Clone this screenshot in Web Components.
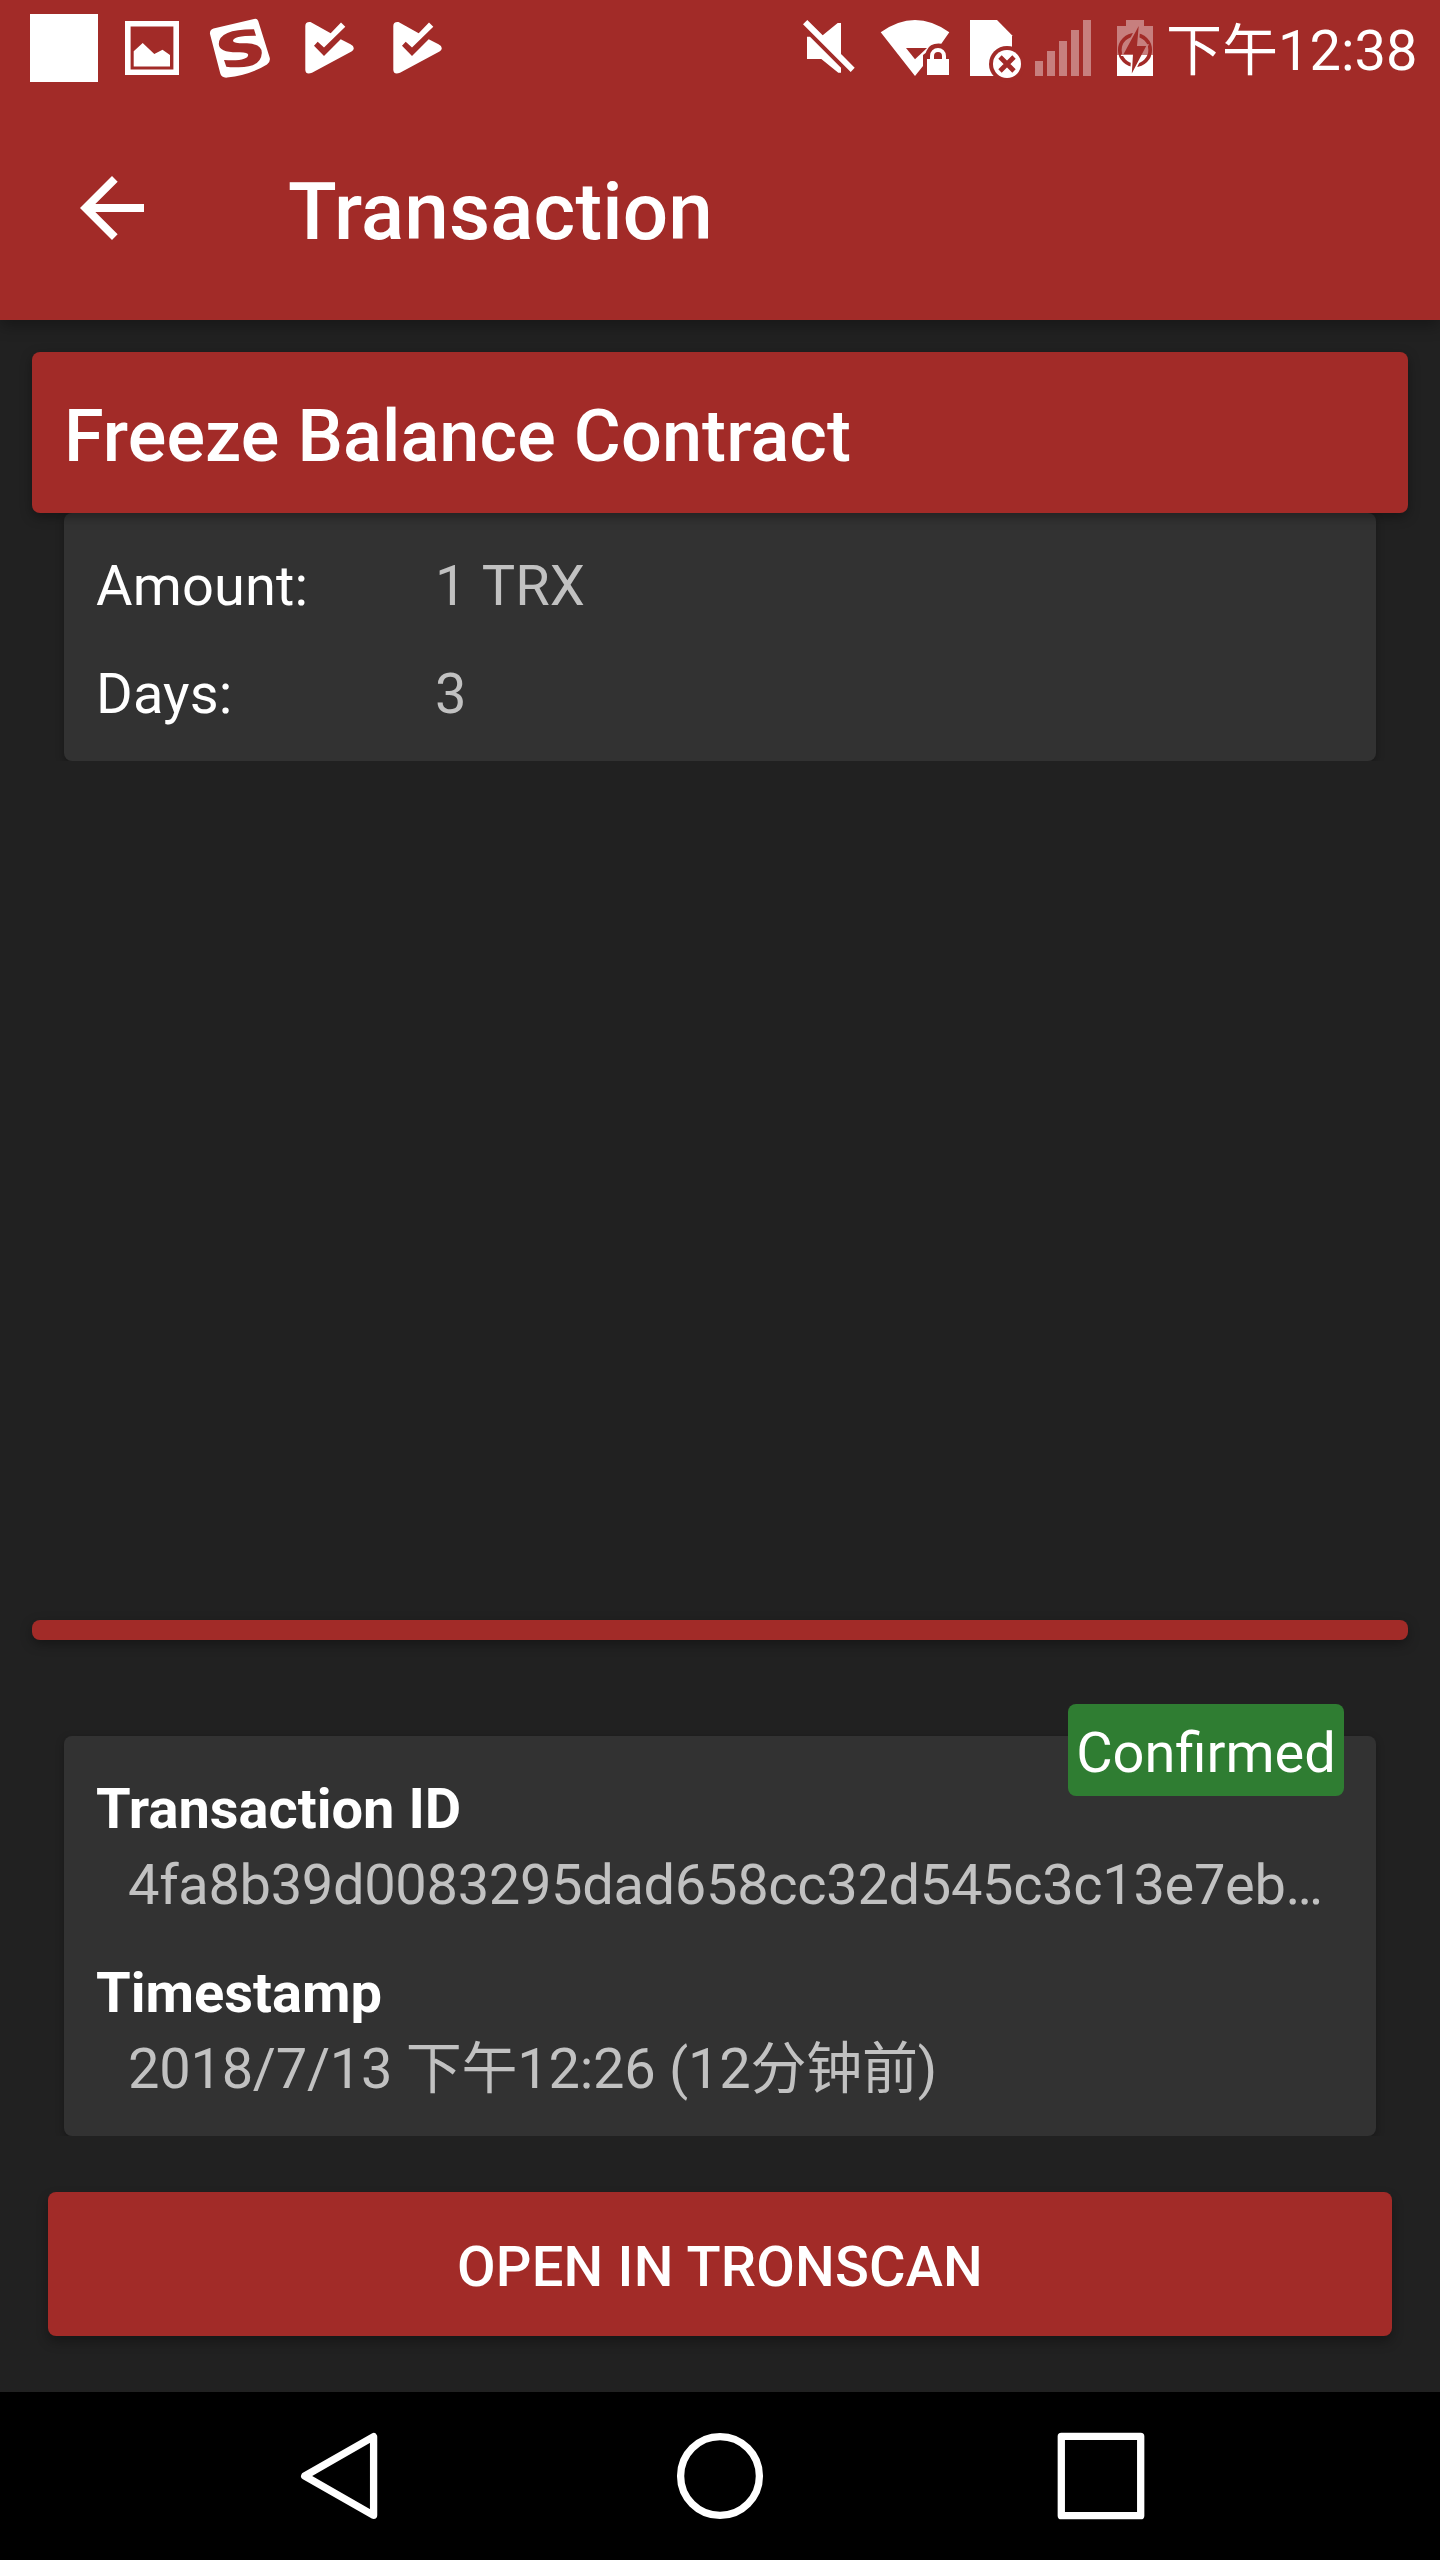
<!DOCTYPE html>
<html lang="zh-CN">
<head>
<meta charset="utf-8">
<title>Transaction</title>
<style>
  html, body { margin: 0; padding: 0; }
  body {
    width: 1440px; height: 2560px; overflow: hidden; background: #212121;
    font-family: Roboto, "Noto Sans CJK SC", sans-serif; color: #fff;
    --accent: #a22b28; --card: #323232; --muted: #c1c1c1; --ok: #2f7d32;
  }
</style>
</head>
<body>
<transaction-screen></transaction-screen>
<script>
const ICONS = {
  square: { box: '0 0 110 96', art: '<rect x="30" y="14" width="68" height="68"/>' },
  picture: { box: '110 0 84 96', art: '<path fill-rule="evenodd" d="M125 21h54v54h-54zM130.6 26.6v42.8h42.8v-42.8z"/><path d="M133.7 51.3 142.7 43 154.3 54 162.5 49.8 170 55V66.5H133.7z"/>' },
  sogou: { box: '194 0 96 96', art: '<path d="M213.500 28.500L254 19Q257 18 258.200 21L269.800 58Q270.500 62 267 64.500Q250 75 227 77.600Q221.500 78 220.300 73.500L210 34Q209.500 30 213.500 28.500Z"/><path fill="var(--accent)" d="M254 29.200 256 35.700Q233 35.500 233 41Q233.500 43.600 247 43.300Q262 44 261.800 53Q261 67.500 238 67.300Q231 67.500 226.300 66.700L224 60Q248 61.500 248.200 54.800Q248 52 238 52.300Q219 52.500 218.800 44Q219 29 254 29.200Z"/>' },
  check: { box: '290 0 88 96', art: '<path d="M305.300 26Q305.300 21.500 310.500 22L330.700 33.300 341 22.600 345.300 26.700 324 47.500 317.700 41.700 314 45.700 324 56 340.700 39.300 350.500 44.300Q353.800 46 353.800 48.200Q353.800 50.300 351.500 51.500L312 72.800Q305.800 75.300 305.300 70Z"/>' },
  mute: { box: '790 0 78 96', art: '<path d="M807.300 20 822.700 35.300 837.700 23H841V54.300H841.300L854.700 67.700 850.700 72 803 24.300ZM807 36.700H810L841 67.700V72.700H838.300L821.300 59H807Z"/>' },
  wifi: { box: '868 0 92 96', art: '<path d="M915 76 880.700 32.300Q915 7.700 949.300 32.300L941.300 43.700Q930 42.500 926.700 50.500Q926.300 53.500 923 55V66Z"/><path fill="var(--accent)" d="M906 48H927L915 59.200Z"/><rect x="927" y="59" width="22" height="16"/><path fill="none" stroke="#fff" stroke-width="4" d="M932 60V56a6 6 0 0 1 12 0V60"/>' },
  sim: { box: '960 0 68 96', art: '<path d="M970 20H997L1012 35.300V76H970Z"/><circle cx="1007" cy="64" r="18" fill="var(--accent)"/><circle cx="1007" cy="64" r="14"/><path stroke="var(--accent)" stroke-width="4.800" d="M1000 57 1014 71M1014 57 1000 71"/>' },
  signal: { box: '1028 0 72 96', art: '<path opacity=".4" d="M1035 61h8v15h-8zM1047 51h8v25h-8zM1059 41h8v35h-8zM1071 30h8v46h-8zM1083 20h8v56h-8z"/>' },
  battery: { box: '1100 0 65 96', art: '<mask id="m" maskUnits="userSpaceOnUse" x="1100" y="0" width="65" height="96"><rect x="1100" width="65" height="96" fill="#fff"/><circle cx="1135" cy="50" r="15.200" fill="none" stroke="#000" stroke-width="3.700"/><path d="M1138.700 26 1123.500 54.300H1133L1131.800 73.500 1146.200 46H1137Z" fill="#000" stroke="#fff" stroke-width="3.400" paint-order="stroke"/></mask><g mask="url(#m)"><path opacity=".4" d="M1126 20h18v6h9v29h-36v-29h9z"/><path d="M1117 55h36v21h-36z"/></g>' },
  back: { box: '0 0 24 24', art: '<path d="M20 11H7.830l5.590-5.590L12 4l-8 8 8 8 1.410-1.410L7.830 13H20v-2z"/>' },
  navback: { box: '0 0 96 96', art: '<path fill="none" stroke="#fff" stroke-width="7.300" stroke-linejoin="round" d="M81.600 8.700V87.300L12.700 48Z"/>' },
  home: { box: '0 0 96 96', art: '<circle cx="48" cy="48" r="39.400" fill="none" stroke="#fff" stroke-width="7.300"/>' },
  recent: { box: '0 0 96 96', art: '<rect x="8.300" y="8.300" width="79.400" height="79.400" fill="none" stroke="#fff" stroke-width="7.300" stroke-linejoin="round"/>' }
};

function define(name, html) {
  const template = document.createElement('template');
  template.innerHTML = html;
  customElements.define(name, class extends HTMLElement {
    constructor() {
      super();
      this.attachShadow({ mode: 'open' }).append(template.content.cloneNode(true));
    }
  });
}

class AppIcon extends HTMLElement {
  connectedCallback() {
    const icon = ICONS[this.getAttribute('name')];
    const [, , w, h] = icon.box.split(' ');
    const size = this.getAttribute('size');
    const root = this.shadowRoot || this.attachShadow({ mode: 'open' });
    root.innerHTML = `<style>:host{display:block;flex:none}svg{display:block;fill:#fff}</style>
      <svg width="${size || w}" height="${size || h}" viewBox="${icon.box}" aria-hidden="true">${icon.art}</svg>`;
  }
}
customElements.define('app-icon', AppIcon);

define('status-bar', `
  <style>
    :host { display: flex; justify-content: space-between; height: 96px; background: var(--accent); }
    .group { display: flex; }
    .right { padding-right: 24px; }
    time { box-sizing: border-box; width: 251px; padding: 18px 0 0 1px; font-size: 56px; line-height: 66px; white-space: nowrap; }
  </style>
  <div class="group">
    <app-icon name="square"></app-icon><app-icon name="picture"></app-icon><app-icon name="sogou"></app-icon>
    <app-icon name="check"></app-icon><app-icon name="check"></app-icon>
  </div>
  <div class="group right">
    <app-icon name="mute"></app-icon><app-icon name="wifi"></app-icon><app-icon name="sim"></app-icon>
    <app-icon name="signal"></app-icon><app-icon name="battery"></app-icon>
    <time>下午12:38</time>
  </div>`);

define('tool-bar', `
  <style>
    :host { display: flex; align-items: center; height: 224px; padding-left: 64px; gap: 128px;
      background: var(--accent); box-shadow: 0 6px 14px rgba(0,0,0,.3); clip-path: inset(0 0 -30px 0); }
    h1 { margin: 0; padding-top: 8px; font-size: 80px; line-height: 94px; font-weight: 500; letter-spacing: .12px; }
  </style>
  <app-icon name="back" size="96"></app-icon><h1><slot></slot></h1>`);

define('contract-header', `
  <style>
    :host { display: block; position: relative; box-sizing: border-box; height: 161px; margin: 0 32px;
      padding: 43px 32px 0; border-radius: 8px; background: var(--accent);
      box-shadow: 0 4px 12px rgba(0,0,0,.35); font-size: 72px; line-height: 84px; font-weight: 500; letter-spacing: .1px; }
  </style><slot></slot>`);

define('info-card', `
  <style>
    :host { display: block; position: relative; box-sizing: border-box; margin: 0 64px; padding: 40px 32px 0;
      border-radius: 8px; background: var(--card); box-shadow: 0 3px 8px rgba(0,0,0,.3);
      clip-path: inset(-60px -20px 0 -20px); font-size: 56px; line-height: 66px; }
    ::slotted([slot=badge]) { position: absolute; top: -32px; right: 32px; }
  </style><slot></slot><slot name="badge"></slot>`);

define('detail-row', `
  <style>
    :host { display: flex; margin-bottom: 42px; }
    .label { width: 339px; letter-spacing: .15px; }
    .value { color: var(--muted); word-spacing: 2.5px; }
  </style><div class="label"><slot name="label"></slot></div><div class="value"><slot></slot></div>`);

define('stacked-field', `
  <style>
    :host { display: flex; flex-direction: column; gap: 10px; margin-bottom: 42px; }
    .label { height: 66px; font-weight: 700; }
    .value { height: 66px; padding-left: 32px; color: var(--muted); white-space: nowrap;
      letter-spacing: var(--tracking, -.33px); }
  </style><div class="label"><slot name="label"></slot></div><div class="value"><slot></slot></div>`);

define('status-badge', `
  <style>
    :host { display: block; box-sizing: border-box; width: 276px; height: 92px; padding-top: 16px;
      border-radius: 8px; background: var(--ok); text-align: center; white-space: nowrap; }
  </style><slot></slot>`);

define('divider-bar', `
  <style>:host { display: block; height: 20px; margin: 0 32px; border-radius: 8px; background: var(--accent);
    box-shadow: 0 4px 12px rgba(0,0,0,.35); }</style>`);

define('action-button', `
  <style>
    :host { display: block; margin: 0 48px; }
    button { display: block; width: 100%; height: 144px; padding: 6px 0 0; border: 0; border-radius: 8px;
      background: var(--accent); color: #fff; font: 500 56px/66px Roboto, sans-serif; letter-spacing: .2px;
      box-shadow: 0 6px 12px rgba(0,0,0,.3); }
  </style><button><slot></slot></button>`);

define('nav-bar', `
  <style>:host { display: flex; justify-content: center; align-items: center; gap: 284.5px; height: 168px; background: #000; }</style>
  <app-icon name="navback"></app-icon><app-icon name="home"></app-icon><app-icon name="recent"></app-icon>`);

define('transaction-screen', `
  <style>
    :host { display: flex; flex-direction: column; height: 2560px; }
    main { display: flex; flex-direction: column; flex: 1; padding: 32px 0 56px; }
    contract-header { z-index: 1; }
    .details { height: 248px; }
    divider-bar { margin-top: auto; margin-bottom: 96px; }
    .summary { height: 400px; margin-bottom: 56px; }
    .time { --tracking: -.26px; }
  </style>
  <status-bar></status-bar>
  <tool-bar>Transaction</tool-bar>
  <main>
    <contract-header>Freeze Balance Contract</contract-header>
    <info-card class="details">
      <detail-row><span slot="label">Amount:</span>1 TRX</detail-row>
      <detail-row><span slot="label">Days:</span>3</detail-row>
    </info-card>
    <divider-bar></divider-bar>
    <info-card class="summary">
      <stacked-field><span slot="label">Transaction ID</span>4fa8b39d0083295dad658cc32d545c3c13e7eb…</stacked-field>
      <stacked-field class="time"><span slot="label">Timestamp</span>2018/7/13 下午12:26 (12分钟前)</stacked-field>
      <status-badge slot="badge">Confirmed</status-badge>
    </info-card>
    <action-button>OPEN IN TRONSCAN</action-button>
  </main>
  <nav-bar></nav-bar>`);
</script>
</body>
</html>
